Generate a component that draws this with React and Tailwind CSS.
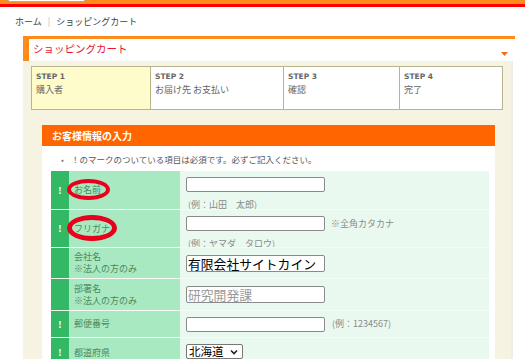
import React from "react";

const rows = [
  { req: true, label: ["お名前"], h: "h-[38px]", mark: "name" },
  { req: true, label: ["フリガナ"], h: "h-[38px]", mark: "kana" },
  { req: false, label: ["会社名", "※法人の方のみ"], h: "h-[31px]" },
  { req: false, label: ["部署名", "※法人の方のみ"], h: "h-[32px]" },
  { req: true, label: ["郵便番号"], h: "h-[27px]" },
  { req: true, label: ["都道府県"], h: "h-[30px]" },
];

const steps = [
  { no: "STEP 1", name: "購入者", w: "w-[118px]", on: true },
  { no: "STEP 2", name: "お届け先 お支払い", w: "w-[133px]" },
  { no: "STEP 3", name: "確認", w: "w-[116px]" },
  { no: "STEP 4", name: "完了", w: "flex-1" },
];

const Box = ({ value, placeholder, big }) => (
  <input
    readOnly
    value={value || ""}
    placeholder={placeholder}
    className={`w-[139px] border border-[#8a8a8a] rounded-[2px] bg-white px-[1px] text-black outline-none placeholder:text-[#9a9a9a] ${
      big ? "h-[17px] text-[12.8px] leading-[15px]" : "h-[15px] text-[10px]"
    }`}
  />
);

const Hint = ({ children }) => (
  <span className="text-[9px] leading-[10px] text-[#8a8a8a]">{children}</span>
);

function Value({ i }) {
  if (i === 0)
    return (
      <div className="flex flex-col gap-[1px] pt-[6px] self-start">
        <Box />
        <div className="pl-[2px]"><Hint>(例：山田　太郎)</Hint></div>
      </div>
    );
  if (i === 1)
    return (
      <div className="flex flex-col gap-[1px] pt-[6px] self-start">
        <div className="flex items-center gap-[6px]">
          <Box />
          <Hint>※全角カタカナ</Hint>
        </div>
        <div className="pl-[2px]"><Hint>(例：ヤマダ　タロウ)</Hint></div>
      </div>
    );
  if (i === 2) return <Box big value="有限会社サイトカイン" />;
  if (i === 3) return <Box big placeholder="研究開発課" />;
  if (i === 4)
    return (
      <div className="flex items-center gap-[7px]">
        <Box />
        <Hint>(例：1234567)</Hint>
      </div>
    );
  return (
    <div className="self-start mt-[6px] flex h-[15px] w-[57px] items-center justify-between rounded-[2px] border border-[#777] bg-white pl-[2px] pr-[4px] text-[11.5px] text-black">
      北海道
      <svg width="8" height="6" viewBox="0 0 8 6">
        <path d="M1 1.5 L4 4.5 L7 1.5" fill="none" stroke="#222" strokeWidth="1.6" />
      </svg>
    </div>
  );
}

export default function App() {
  return (
    <div className="w-[525px] h-[359px] overflow-hidden bg-white font-['Noto_Sans_CJK_JP',sans-serif] leading-none text-[#444]">
      {/* top strip */}
      <div className="h-[4px] bg-[#ff8c1a] pl-[8px]">
        <div className="h-[2px] w-[77px] border-x border-b border-[#aaa] bg-white" />
      </div>
      <div className="h-[3px] bg-[#ff0000]" />

      {/* breadcrumb */}
      <div className="flex items-center pl-[15px] pt-[10px] text-[9px] leading-[9px] text-[#444]">
        <span>ホーム</span>
        <span className="mx-[6px] text-[#bbb]">|</span>
        <span>ショッピングカート</span>
      </div>

      <div className="ml-[23px] mt-[10px] w-[492px]">
        {/* card title */}
        <div className="flex h-[25px] items-start justify-between border-t-[3px] border-l-[6px] border-[#ff8c1a] pl-[4px] pr-[7px] pt-[4px]">
          <span className="text-[10.5px] leading-[11px] text-[#e8132a]">ショッピングカート</span>
          <svg width="7" height="4" viewBox="0 0 7 4" className="mt-[9px]">
            <path d="M0 0 H7 L3.5 4 Z" fill="#ff6a00" />
          </svg>
        </div>

        <div className="w-[490px] bg-[#f6f3e2] pl-[8px] pt-[5px] border-r-[2px] border-[#efeee6]">
          {/* steps */}
          <div className="flex h-[44px] w-[472px] border border-[#b7b48e] bg-white">
            {steps.map((s, i) => (
              <div
                key={s.no}
                className={`${s.w} ${i ? "border-l border-[#b7b48e]" : ""} ${
                  s.on ? "bg-[#fffccc]" : ""
                } flex flex-col gap-[4px] pl-[4px] pt-[5px]`}
              >
                <span className="font-['DejaVu_Sans',sans-serif] text-[7.5px] font-bold leading-[9px] text-[#666]">
                  {s.no}
                </span>
                <span className="text-[9px] leading-[9px] text-[#666]">{s.name}</span>
              </div>
            ))}
          </div>

          {/* customer section */}
          <div className="ml-[11px] mt-[15px] w-[453px]">
            <div className="flex h-[21px] items-center bg-[#ff6600] pl-[10px] text-[10px] font-bold text-white">
              お客様情報の入力
            </div>
            <div className="bg-white pb-[4px] pl-[9px] pr-[6px]">
              <div className="flex items-center pl-[10px] pt-[9px] pb-[7px] text-[8.5px] leading-[9px] text-[#555]">
                <span className="w-[10px] text-[#777]">•</span>
                <span>！のマークのついている項目は必須です。必ずご記入ください。</span>
              </div>

              <div className="flex flex-col">
                {rows.map((r, i) => (
                  <div key={i} className={`flex ${r.h} ${i ? "border-t border-[#f2fbf5]" : ""}`}>
                    <div className="flex w-[18px] items-center justify-center bg-[#33b865] text-[9px] font-bold text-white">
                      {r.req ? "!" : ""}
                    </div>
                    <div className="relative flex w-[111px] flex-col justify-center bg-[#a9e9c2] pl-[5px] text-[9px] leading-[12px] text-[#4a8a5a]">
                      {r.label.map((l) => (
                        <span key={l}>{l}</span>
                      ))}
                      {r.mark === "name" && (
                        <div className="absolute left-[-2px] top-[8px] h-[21px] w-[43px] rounded-[50%] border-[4.5px] border-[#e8001c]" />
                      )}
                      {r.mark === "kana" && (
                        <div className="absolute left-[-2px] top-[5px] h-[26px] w-[50px] rounded-[50%] border-[5px] border-[#e8001c]" />
                      )}
                    </div>
                    <div className="flex flex-1 items-center bg-[#e9f9ef] pl-[6px]">
                      <Value i={i} />
                    </div>
                  </div>
                ))}
              </div>
            </div>
          </div>
        </div>
      </div>
    </div>
  );
}
